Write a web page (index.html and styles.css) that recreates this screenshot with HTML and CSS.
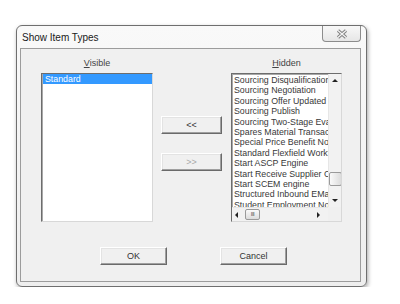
FILE: index.html
```html
<!DOCTYPE html>
<html lang="en">
<head>
    <meta charset="UTF-8">
    <title>Show Item Types</title>
    <link rel="stylesheet" href="styles.css">
</head>
<body>
    <div class="window">
        <!-- title bar -->
        <div class="titlebar">
            <span class="title">Show Item Types</span>
            <div class="close-btn">
                <svg width="12" height="10" viewBox="0 0 12 10">
                    <path d="M2 1.5 L10 8.5 M10 1.5 L2 8.5" stroke="#7d7d7d" stroke-width="3.2" fill="none"/>
                    <path d="M2 1.5 L10 8.5 M10 1.5 L2 8.5" stroke="#f4f4f4" stroke-width="1.3" fill="none"/>
                </svg>
            </div>
        </div>

        <!-- client area -->
        <div class="client">
            <div class="lists-row">
                <div class="list-col">
                    <div class="list-label"><u>V</u>isible</div>
                    <div class="listbox">
                        <div class="items">
                            <div class="item selected">Standard</div>
                        </div>
                    </div>
                </div>

                <div class="move-col">
                    <button class="btn btn-move">&lt;&lt;</button>
                    <button class="btn btn-move disabled">&gt;&gt;</button>
                </div>

                <div class="list-col right">
                    <div class="list-label"><u>H</u>idden</div>
                    <div class="listbox scrolled">
                        <div class="items">
                            <div class="item">Sourcing Disqualification</div>
                            <div class="item">Sourcing Negotiation</div>
                            <div class="item">Sourcing Offer Updated</div>
                            <div class="item">Sourcing Publish</div>
                            <div class="item">Sourcing Two-Stage Evaluation</div>
                            <div class="item">Spares Material Transaction</div>
                            <div class="item">Special Price Benefit Notification</div>
                            <div class="item">Standard Flexfield Workflow</div>
                            <div class="item">Start ASCP Engine</div>
                            <div class="item">Start Receive Supplier Collaboration</div>
                            <div class="item">Start SCEM engine</div>
                            <div class="item">Structured Inbound EMail</div>
                            <div class="item">Student Employment Notification</div>
                        </div>
                        <div class="vscroll">
                            <span class="arrow up"></span>
                            <span class="thumb-v"></span>
                            <span class="arrow down"></span>
                        </div>
                        <div class="hscroll">
                            <span class="arrow left"></span>
                            <span class="thumb-h">III</span>
                            <span class="arrow right"></span>
                        </div>
                        <div class="corner"></div>
                    </div>
                </div>
            </div>

            <div class="buttons-row">
                <button class="btn btn-main">OK</button>
                <button class="btn btn-main">Cancel</button>
            </div>
        </div>
    </div>
</body>
</html>
```

FILE: styles.css
```css
body {
    margin: 0;
    background: #ffffff;
    font-family: "Liberation Sans", Arial, sans-serif;
    color: #1a1a1a;
}

/* dialog frame */
.window {
    margin: 25px 0 0 16px;
    width: 351px;
    height: 262px;
    box-sizing: border-box;
    border: 1px solid #6f6f6f;
    border-radius: 6px;
    background: linear-gradient(#f9f9f9, #eeeeee);
    padding: 0 5px 4px 3px;
    box-shadow: 1px 2px 4px rgba(0,0,0,0.35);
    display: flex;
    flex-direction: column;
}

.titlebar {
    height: 22px;
    display: flex;
    align-items: flex-start;
    justify-content: space-between;
}

.title {
    font-size: 10px;
    padding: 6px 0 0 2px;
    color: #202020;
}

.close-btn {
    width: 37px;
    height: 15px;
    border: 1px solid #8c8c8c;
    border-top: none;
    border-radius: 0 0 4px 4px;
    background: linear-gradient(#f8f8f8, #e6e6e6);
    display: flex;
    align-items: center;
    justify-content: center;
}

.client {
    flex: 1;
    border: 1px solid #9c9c9c;
    background: #f0f0f0;
    display: flex;
    flex-direction: column;
}

.lists-row {
    display: flex;
    padding-left: 20px;
}

.list-col {
    width: 112px;
    display: flex;
    flex-direction: column;
}

.list-col.right {
    width: 111px;
    margin-left: 9px;
}

.list-label {
    height: 24px;
    box-sizing: border-box;
    padding-top: 8px;
    font-size: 9px;
    line-height: 12px;
    text-align: center;
    color: #444;
}

.listbox {
    height: 149px;
    box-sizing: border-box;
    background: #ffffff;
    border-top: 1px solid #6d6d6d;
    border-left: 1px solid #6d6d6d;
    border-right: 1px solid #d8d8d8;
    border-bottom: 1px solid #d8d8d8;
    box-shadow: inset 1px 1px 0 #a8a8a8;
    overflow: hidden;
}

.items {
    font-size: 8.8px;
    line-height: 10.4px;
    white-space: nowrap;
    overflow: hidden;
}

.item {
    padding-left: 2px;
    color: #383838;
}

.item.selected {
    background: #3399ff;
    color: #ffffff;
    margin-left: 1px;
}

/* hidden list with scrollbars */
.listbox.scrolled {
    display: grid;
    grid-template-columns: 1fr 13px;
    grid-template-rows: 1fr 14px;
}

.listbox.scrolled .items {
    padding-top: 1px;
}

.vscroll {
    background: #f2f2f2;
    border-left: 1px solid #e6e6e6;
    display: flex;
    flex-direction: column;
    align-items: center;
    position: relative;
}

.hscroll {
    background: #f2f2f2;
    border-top: 1px solid #e6e6e6;
    display: flex;
    align-items: center;
}

.corner {
    background: #f0f0f0;
}

.arrow {
    width: 0;
    height: 0;
    border: 3px solid transparent;
}

.arrow.up {
    border-bottom: 3px solid #222;
    border-top-width: 0;
    margin-top: 5px;
}

.arrow.down {
    border-top: 3px solid #222;
    border-bottom-width: 0;
    margin-top: auto;
    margin-bottom: 5px;
}

.arrow.left {
    border-right: 3px solid #222;
    border-left-width: 0;
    margin-left: 3px;
}

.arrow.right {
    border-left: 3px solid #222;
    border-right-width: 0;
    margin-left: auto;
    margin-right: 8px;
}

/* scroll thumb sits over the track */
.thumb-v {
    position: absolute;
    left: 0;
    top: 98px;
    width: 11px;
    height: 12px;
    border: 1px solid #9a9a9a;
    border-radius: 2px;
    background: linear-gradient(90deg, #fafafa, #dcdcdc);
}

.thumb-h {
    margin-left: 7px;
    width: 15px;
    height: 11px;
    box-sizing: border-box;
    border: 1px solid #9a9a9a;
    border-radius: 2px;
    background: linear-gradient(#fafafa, #dcdcdc);
    font-size: 6px;
    line-height: 9px;
    text-align: center;
    color: #555;
    letter-spacing: -0.5px;
}

/* move buttons */
.move-col {
    width: 61px;
    margin-left: 8px;
    padding-top: 67px;
    display: flex;
    flex-direction: column;
    gap: 19px;
}

.btn {
    font-family: "Liberation Sans", Arial, sans-serif;
    font-size: 9px;
    color: #333;
    background: #f0f0f0;
    border-top: 1px solid #ffffff;
    border-left: 1px solid #ffffff;
    border-right: 1px solid #6a6a6a;
    border-bottom: 1px solid #6a6a6a;
    box-shadow: inset -1px -1px 0 #a0a0a0, inset 1px 1px 0 #e3e3e3;
    padding: 0;
    height: 18px;
}

.btn.disabled {
    color: #a8a8a8;
}

.buttons-row {
    display: flex;
    gap: 53px;
    padding-left: 79px;
    margin-top: 25px;
}

.btn-main {
    width: 67px;
}
```
